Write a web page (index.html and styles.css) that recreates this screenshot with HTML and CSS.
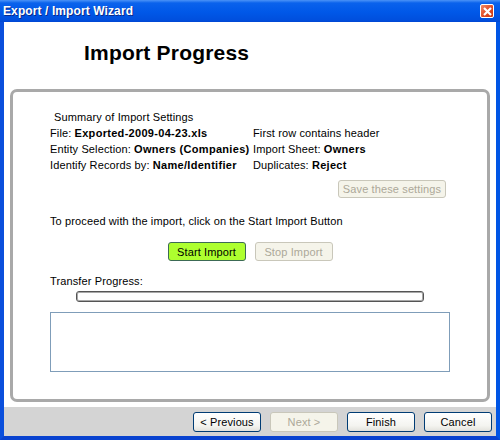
FILE: index.html
```html
<!DOCTYPE html>
<html lang="en">
<head>
    <meta charset="UTF-8">
    <title>Export / Import Wizard</title>
    <link rel="stylesheet" href="styles.css">
</head>
<body>
    <div class="window">
        <div class="titlebar">
            <span class="title">Export / Import Wizard</span>
            <span class="close">
                <svg width="9" height="9" viewBox="0 0 9 9"><path d="M1 1 L8 8 M8 1 L1 8" stroke="#fff" stroke-width="2.2"/></svg>
            </span>
        </div>
        <div class="client">
            <h1 class="heading">Import Progress</h1>
            <div class="panel">
                <div class="summary-title">Summary of Import Settings</div>
                <div class="settings">
                    <div>File: <b>Exported-2009-04-23.xls</b></div>
                    <div>First row contains header</div>
                    <div>Entity Selection: <b>Owners (Companies)</b></div>
                    <div>Import Sheet: <b>Owners</b></div>
                    <div>Identify Records by: <b>Name/Identifier</b></div>
                    <div>Duplicates: <b>Reject</b></div>
                </div>
                <div class="save-row">
                    <button class="btn save" disabled>Save these settings</button>
                </div>
                <div class="hint">To proceed with the import, click on the Start Import Button</div>
                <div class="import-buttons">
                    <button class="btn start">Start Import</button>
                    <button class="btn stop" disabled>Stop Import</button>
                </div>
                <div class="progress-label">Transfer Progress:</div>
                <div class="progress"></div>
                <textarea class="log"></textarea>
            </div>
            <div class="footer">
                <button class="btn nav">&lt; Previous</button>
                <button class="btn nav" disabled>Next &gt;</button>
                <button class="btn nav">Finish</button>
                <button class="btn nav">Cancel</button>
            </div>
        </div>
    </div>
</body>
</html>
```

FILE: styles.css
```css
body, html {
    margin: 0;
    padding: 0;
    width: 500px;
    height: 440px;
    overflow: hidden;
    font-family: 'Liberation Sans', Arial, sans-serif;
}
.window {
    width: 500px;
    height: 440px;
    box-sizing: border-box;
    display: flex;
    flex-direction: column;
    background: #0054e3;
    border: 4px solid #0055e5;
    border-top: none;
    border-left-color: #0a4fdc;
    border-bottom-color: #0842d0;
}
.titlebar {
    height: 22px;
    margin: 0 -4px;
    padding: 0 6px 0 3px;
    display: flex;
    align-items: center;
    justify-content: space-between;
    background: linear-gradient(#4b93f7 0, #0a62ec 3px, #0058e8 12px, #004fdd 20px, #0046d2 22px);
}
.title {
    color: #fff;
    font-family: 'Liberation Sans', Arial, sans-serif;
    font-weight: bold;
    font-size: 12px;
    letter-spacing: 0.1px;
    text-shadow: 1px 1px 0 #0a2a8a;
}
.close {
    width: 12px;
    height: 12px;
    display: flex;
    align-items: center;
    justify-content: center;
    border: 1px solid #fff;
    border-radius: 2px;
    background: linear-gradient(135deg, #f08a68, #e04a24 55%, #c53812);
}
.client {
    flex: 1;
    background: #fff;
    display: flex;
    flex-direction: column;
}
.heading {
    margin: 0;
    padding: 19px 0 0 80px;
    height: 48px;
    box-sizing: border-box;
    font-size: 21px;
    line-height: 24px;
    letter-spacing: 0.2px;
    color: #000;
}
.panel {
    margin: 19px 6px 0;
    height: 313px;
    box-sizing: border-box;
    border: 3px solid #a9a9a9;
    border-radius: 7px;
    padding: 17px 0 0 37px;
    font-size: 11px;
    line-height: 16px;
    letter-spacing: 0.12px;
    color: #000;
}
.panel b {
    letter-spacing: 0.3px;
}
.summary-title {
    padding-left: 4px;
}
.settings {
    display: grid;
    grid-template-columns: 203px 1fr;
    white-space: nowrap;
}
.btn {
    font-family: 'Liberation Sans', Arial, sans-serif;
    font-size: 11px;
    letter-spacing: 0.12px;
    color: #000;
    background: linear-gradient(#ffffff, #f4f4f0 70%, #e3e2dc);
    border: 1px solid #003c74;
    border-radius: 3px;
    padding: 0;
    box-sizing: border-box;
}
.btn:disabled {
    color: #aca899;
    background: #f5f4ea;
    border-color: #c9c7ba;
}
.save-row {
    display: flex;
    justify-content: flex-end;
    padding-right: 41px;
    margin-top: 7px;
}
.save {
    width: 108px;
    height: 18px;
}
.hint {
    margin-top: 15px;
}
.import-buttons {
    display: flex;
    justify-content: center;
    gap: 9px;
    margin: 13px 0 0 -37px;
}
.start, .stop {
    width: 78px;
    height: 19px;
}
.start {
    background: #adff2f;
    border-color: #3c6a55;
}
.progress-label {
    margin-top: 12px;
}
.progress {
    margin: 2px 0 0 26px;
    width: 348px;
    height: 11px;
    box-sizing: border-box;
    border: 1px solid #555;
    border-radius: 3px;
    box-shadow: inset 0 0 0 1px #a8a8a8;
    background: #fff;
}
.log {
    display: block;
    margin-top: 10px;
    width: 400px;
    height: 60px;
    box-sizing: border-box;
    border: 1px solid #7f9db9;
    resize: none;
    padding: 0;
}
.footer {
    margin-top: 5px;
    flex: 1;
    background: #d4d4d4;
    display: flex;
    justify-content: flex-end;
    align-items: flex-start;
    gap: 9px;
    padding: 5px 4px 0 0;
}
.nav {
    width: 68px;
    height: 20px;
}
```
